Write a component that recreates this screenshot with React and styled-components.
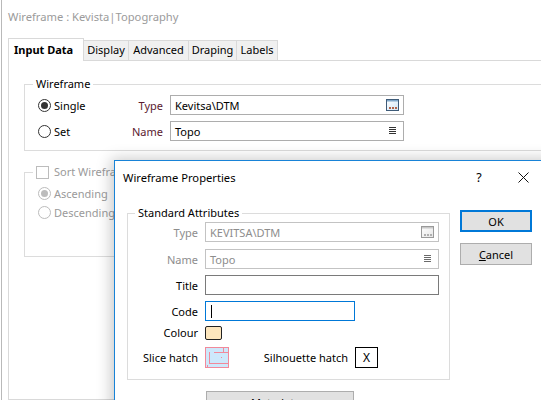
import React from "react";
import styled, { createGlobalStyle } from "styled-components";

const GlobalStyle = createGlobalStyle`
  html, body { margin: 0; padding: 0; background: #fff; }
  body {
    font-family: "Noto Sans", "Segoe UI", sans-serif;
    font-size: 11px;
    color: #000;
    overflow: hidden;
  }
  * { box-sizing: border-box; }
`;

const Screen = styled.div`
  position: relative;
  width: 541px;
  height: 400px;
  overflow: hidden;
  background: #fff;
  padding-left: 1px;
`;

const MainWindow = styled.div`
  display: flex;
  flex-direction: column;
  height: 400px;
  border-left: 1px solid #b9b9b9;
`;

const TitleBar = styled.div`
  height: 38px;
  padding: 7px 0 0 6px;
  line-height: 20px;
  color: #9b9b9b;
  font-size: 11.2px;
`;

const TabRow = styled.div`
  display: flex;
  align-items: flex-end;
  height: 23px;
  margin: 0 0 -1px 6px;
`;

const Tab = styled.div`
  position: relative;
  width: ${(p) => p.$w}px;
  height: ${(p) => (p.$active ? 23 : 20)}px;
  margin-bottom: ${(p) => (p.$active ? 0 : 1)}px;
  border: 1px solid #d9d9d9;
  border-bottom: none;
  border-left: ${(p) => (p.$first ? "1px solid #d9d9d9" : "none")};
  background: ${(p) => (p.$active ? "#fff" : "#f0f0f0")};
  font-weight: ${(p) => (p.$active ? 700 : 400)};
  padding-left: ${(p) => (p.$active ? 5 : 0)}px;
  text-align: ${(p) => (p.$active ? "left" : "center")};
  line-height: ${(p) => (p.$active ? 21 : 18)}px;
  z-index: ${(p) => (p.$active ? 1 : 0)};
`;

const Panel = styled.div`
  flex: 1;
  margin-left: 6px;
  border: 1px solid #d9d9d9;
  border-right: none;
  background: #fff;
  padding: 23px 0 0 15px;
`;

const GroupBox = styled.div`
  position: relative;
  width: ${(p) => p.$w}px;
  height: ${(p) => p.$h}px;
  margin-top: ${(p) => p.$mt || 0}px;
  border: 1px solid #dcdcdc;
  padding: ${(p) => p.$pad};
`;

const Legend = styled.div`
  position: absolute;
  top: -9px;
  left: ${(p) => p.$left}px;
  display: flex;
  align-items: center;
  gap: 5px;
  padding: 0 3px;
  background: #fff;
  line-height: 16px;
  color: ${(p) => (p.$disabled ? "#9a9a9a" : "#000")};
  white-space: nowrap;
`;

const OptionRow = styled.div`
  display: flex;
  align-items: center;
  height: ${(p) => p.$h || 20}px;
  margin-top: ${(p) => p.$mt || 0}px;
`;

const RadioOption = styled.div`
  display: flex;
  align-items: center;
  gap: 3px;
  width: ${(p) => p.$w || 92}px;
  color: ${(p) => (p.$disabled ? "#9a9a9a" : "#000")};
`;

const RadioCircle = styled.span`
  position: relative;
  width: 13px;
  height: 13px;
  border-radius: 50%;
  border: 1px solid ${(p) => (p.$disabled ? "#bcbcbc" : "#333")};
  background: #fff;
  &::after {
    content: "";
    display: ${(p) => (p.$checked ? "block" : "none")};
    position: absolute;
    left: 2px;
    top: 2px;
    width: 7px;
    height: 7px;
    border-radius: 50%;
    background: ${(p) => (p.$disabled ? "#bcbcbc" : "#333")};
  }
`;

const CheckBox = styled.span`
  display: inline-block;
  width: 13px;
  height: 13px;
  border: 1px solid #bcbcbc;
  background: #fff;
`;

const FieldLabel = styled.span`
  width: ${(p) => p.$w}px;
  margin-right: 7px;
  text-align: right;
  white-space: nowrap;
  color: ${(p) => p.$color || "#000"};
`;

const TextBox = styled.div`
  display: flex;
  align-items: center;
  width: ${(p) => p.$w || 234}px;
  height: ${(p) => p.$h || 20}px;
  border: 1px solid ${(p) => p.$border || "#adadad"};
  background: #fff;
  padding: 0 4px;
  color: ${(p) => (p.$disabled ? "#8d8d8d" : "#000")};
`;

const Value = styled.span`
  flex: 1;
  white-space: nowrap;
`;

const Caret = styled.span`
  width: 1px;
  height: 13px;
  margin-left: 1px;
  background: #000;
`;

const Dialog = styled.div`
  position: absolute;
  left: 114px;
  top: 160px;
  width: 440px;
  height: 260px;
  background: #fff;
  border: 1px solid #1883d7;
  box-shadow: 0 2px 14px 3px rgba(0, 0, 0, 0.22);
`;

const DialogTitle = styled.div`
  display: flex;
  align-items: center;
  height: 33px;
  padding: 0 8px;
  font-size: 11.2px;
`;

const CaptionButton = styled.span`
  display: flex;
  align-items: center;
  justify-content: center;
  width: 44px;
  height: 33px;
  font-size: 12.5px;
`;

const DialogBody = styled.div`
  display: flex;
  align-items: flex-start;
  padding-left: 12px;
`;

const LeftColumn = styled.div`
  padding-top: 19px;
`;

const ButtonColumn = styled.div`
  display: flex;
  flex-direction: column;
  gap: 11px;
  margin-left: 10px;
  padding-top: 16px;
`;

const PushButton = styled.div`
  display: flex;
  align-items: center;
  justify-content: center;
  width: ${(p) => p.$w || 72}px;
  height: ${(p) => p.$h || 22}px;
  margin: ${(p) => p.$m || 0};
  background: #e1e1e1;
  border: ${(p) => (p.$default ? "2px solid #0078d7" : "1px solid #adadad")};
  u { text-decoration: underline; }
`;

const FormGrid = styled.div`
  display: flex;
  flex-direction: column;
`;

const Swatch = styled.span`
  width: 17px;
  height: 14px;
  border: 1px solid #222;
  border-radius: 2px;
  background: #fde6bd;
`;

const XBox = styled.span`
  display: flex;
  align-items: center;
  justify-content: center;
  width: 23px;
  height: 21px;
  border: 1px solid #000;
  font-size: 12px;
`;

function BrowseIcon({ disabled }) {
  const frame = disabled ? "#9a9a9a" : "#3e5b78";
  const dot = disabled ? "#b0b0b0" : "#b0654a";
  const id = disabled ? "bgd" : "bg";
  return (
    <svg width="13" height="12" viewBox="0 0 13 12">
      <defs>
        <linearGradient id={id} x1="0" y1="0" x2="1" y2="1">
          <stop offset="0" stopColor="#fff" />
          <stop offset="1" stopColor={disabled ? "#e6e6e6" : "#cfe4f5"} />
        </linearGradient>
      </defs>
      <rect x="0.5" y="0.5" width="12" height="11" fill={`url(#${id})`} stroke={frame} />
      <rect x="1" y="1" width="11" height="1.5" fill={disabled ? "#c8c8c8" : "#7fa6c8"} />
      <rect x="3" y="8" width="2" height="2" fill={dot} />
      <rect x="6" y="8" width="2" height="2" fill={dot} />
      <rect x="9" y="8" width="2" height="2" fill={dot} />
    </svg>
  );
}

function MenuIcon({ disabled }) {
  const c = disabled ? "#6a6a6a" : "#333";
  return (
    <svg width="7" height="8" viewBox="0 0 7 8" style={{ marginRight: 3 }}>
      {[0.5, 2.5, 4.5, 6.5].map((y) => (
        <line key={y} x1="0" y1={y} x2="7" y2={y} stroke={c} strokeWidth="1" />
      ))}
    </svg>
  );
}

function HatchSwatch() {
  const pink = "#f2899a";
  return (
    <svg width="24" height="21" viewBox="0 0 24 21">
      <rect x="0.5" y="0.5" width="23" height="20" fill="#cde8fb" stroke={pink} />
      <line x1="9" y1="5.5" x2="23" y2="5.5" stroke={pink} />
      <line x1="4.5" y1="5" x2="4.5" y2="17" stroke={pink} />
      <line x1="4" y1="16.5" x2="23" y2="16.5" stroke={pink} />
      <rect x="16" y="10" width="1" height="1" fill={pink} />
      <rect x="2" y="18" width="1" height="2" fill={pink} />
      <rect x="18" y="1" width="1" height="4" fill={pink} />
    </svg>
  );
}

export default function App() {
  const tabs = [
    { label: "Input Data", w: 76, active: true },
    { label: "Display", w: 45 },
    { label: "Advanced", w: 60 },
    { label: "Draping", w: 48 },
    { label: "Labels", w: 41 },
  ];

  return (
    <Screen>
      <GlobalStyle />
      <MainWindow>
        <TitleBar>Wireframe : Kevista|Topography</TitleBar>
        <TabRow>
          {tabs.map((t, i) => (
            <Tab key={t.label} $w={t.w} $active={t.active} $first={i === 0}>
              {t.label}
            </Tab>
          ))}
        </TabRow>
        <Panel>
          <GroupBox $w={620} $h={67} $pad="10px 0 0 13px">
            <Legend $left={8}>Wireframe</Legend>
            <OptionRow>
              <RadioOption>
                <RadioCircle $checked />
                Single
              </RadioOption>
              <FieldLabel $w={33} $color="#5a1a30">Type</FieldLabel>
              <TextBox>
                <Value>Kevitsa\DTM</Value>
                <BrowseIcon />
              </TextBox>
            </OptionRow>
            <OptionRow $mt={6}>
              <RadioOption>
                <RadioCircle />
                Set
              </RadioOption>
              <FieldLabel $w={33} $color="#5a1a30">Name</FieldLabel>
              <TextBox>
                <Value>Topo</Value>
                <MenuIcon />
              </TextBox>
            </OptionRow>
          </GroupBox>

          <GroupBox $w={300} $h={85} $mt={21} $pad="11px 0 0 13px">
            <Legend $left={8} $disabled>
              <CheckBox />
              Sort Wireframes
            </Legend>
            <OptionRow $h={19}>
              <RadioOption $disabled>
                <RadioCircle $checked $disabled />
                Ascending
              </RadioOption>
            </OptionRow>
            <OptionRow $h={19}>
              <RadioOption $disabled>
                <RadioCircle $disabled />
                Descending
              </RadioOption>
            </OptionRow>
          </GroupBox>
        </Panel>
      </MainWindow>

      <Dialog>
        <DialogTitle>
          <Value>Wireframe Properties</Value>
          <CaptionButton>?</CaptionButton>
          <CaptionButton>
            <svg width="11" height="11" viewBox="0 0 11 11">
              <path d="M0.5 0.5 L10.5 10.5 M10.5 0.5 L0.5 10.5" stroke="#111" strokeWidth="1" />
            </svg>
          </CaptionButton>
        </DialogTitle>
        <DialogBody>
          <LeftColumn>
            <GroupBox $w={323} $h={167} $pad="8px 0 0 0">
              <Legend $left={7}>Standard Attributes</Legend>
              <FormGrid>
                <OptionRow>
                  <FieldLabel $w={70} $color="#8d8d8d">Type</FieldLabel>
                  <TextBox $disabled $border="#c3c3c3">
                    <Value>KEVITSA\DTM</Value>
                    <BrowseIcon disabled />
                  </TextBox>
                </OptionRow>
                <OptionRow $mt={7}>
                  <FieldLabel $w={70} $color="#8d8d8d">Name</FieldLabel>
                  <TextBox $disabled $border="#c3c3c3">
                    <Value>Topo</Value>
                    <MenuIcon disabled />
                  </TextBox>
                </OptionRow>
                <OptionRow $mt={6}>
                  <FieldLabel $w={70}>Title</FieldLabel>
                  <TextBox $border="#7a7a7a" />
                </OptionRow>
                <OptionRow $mt={6}>
                  <FieldLabel $w={70}>Code</FieldLabel>
                  <TextBox $w={150} $border="#0078d7">
                    <Caret />
                  </TextBox>
                </OptionRow>
                <OptionRow $mt={4} $h={15}>
                  <FieldLabel $w={70}>Colour</FieldLabel>
                  <Swatch />
                </OptionRow>
                <OptionRow $mt={7} $h={21}>
                  <FieldLabel $w={70}>Slice hatch</FieldLabel>
                  <HatchSwatch />
                  <FieldLabel $w={119}>Silhouette hatch</FieldLabel>
                  <XBox>X</XBox>
                </OptionRow>
              </FormGrid>
            </GroupBox>
            <PushButton $w={148} $h={23} $m="11px 0 0 79px">
              Metadata...
            </PushButton>
          </LeftColumn>
          <ButtonColumn>
            <PushButton $default>OK</PushButton>
            <PushButton>
              <span>
                <u>C</u>ancel
              </span>
            </PushButton>
          </ButtonColumn>
        </DialogBody>
      </Dialog>
    </Screen>
  );
}
